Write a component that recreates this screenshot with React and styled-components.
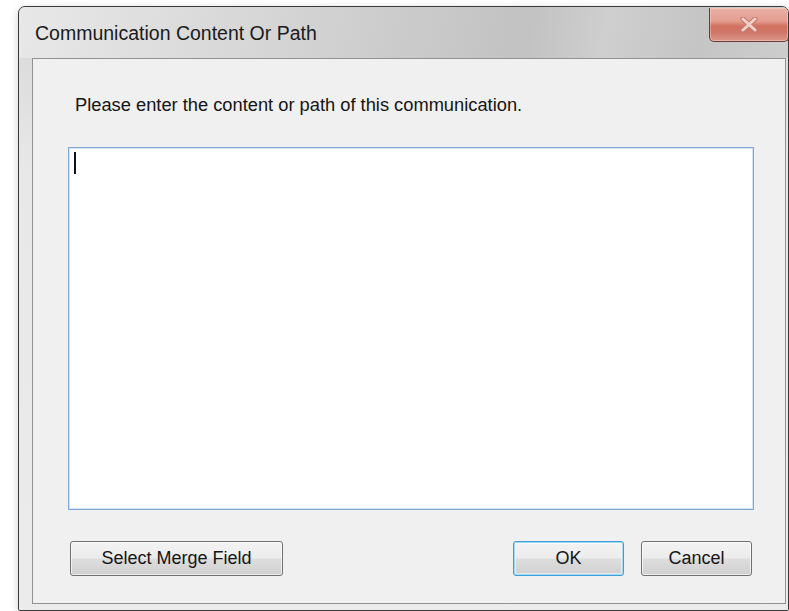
import styled, { createGlobalStyle, css } from "styled-components"

const GlobalStyle = createGlobalStyle`
  html, body {
    margin: 0;
    padding: 0;
    background: #ffffff;
  }
  body {
    font-family: "Liberation Sans", Arial, sans-serif;
    overflow: hidden;
  }
`

function App() {
  return (
    <>
      <GlobalStyle />
      <Window>
        <TitleBar>
          <Title>Communication Content Or Path</Title>
          <CloseButton aria-label="Close">
            <svg width="18" height="15" viewBox="0 0 18 15">
              <path d="M3 2 L15 13 M15 2 L3 13" stroke="#c4766a" strokeWidth="5" strokeLinecap="round" />
              <path d="M3 2 L15 13 M15 2 L3 13" stroke="#f1d0ca" strokeWidth="3" strokeLinecap="round" />
            </svg>
          </CloseButton>
        </TitleBar>
        <Frame>
          <Panel>
            <Prompt>Please enter the content or path of this communication.</Prompt>
            <Field>
              <Caret />
            </Field>
            <ButtonRow>
              <Button $width={213}>Select Merge Field</Button>
              <Spacer />
              <Button $width={111} $default>OK</Button>
              <Button $width={111}>Cancel</Button>
            </ButtonRow>
          </Panel>
        </Frame>
      </Window>
    </>
  )
}

export default App

const Window = styled.div`
  box-sizing: border-box;
  margin: 6px 0 0 18px;
  width: 771px;
  height: 605px;
  display: flex;
  flex-direction: column;
  border: 1px solid #3a3a3a;
  border-radius: 7px 7px 2px 2px;
  background: #e6e6e6;
  box-shadow: inset 1px 0 0 #7a7a7a, inset 0 0 0 2px rgba(255, 255, 255, 0.45),
    0 2px 8px rgba(0, 0, 0, 0.18);
  overflow: hidden;
`

const TitleBar = styled.div`
  height: 51px;
  flex: none;
  display: flex;
  justify-content: space-between;
  align-items: flex-start;
  padding-left: 16px;
  background: linear-gradient(
    100deg,
    #e8e8e8 0%,
    #dadada 25%,
    #cbcbcb 50%,
    #c2c2c2 66%,
    #cfcfcf 76%,
    #c5c5c5 88%,
    #cdcdcd 100%
  );
`

const Title = styled.div`
  margin-top: 15px;
  font-size: 19.5px;
  line-height: 23px;
  color: #1a1a1a;
`

const CloseButton = styled.div`
  box-sizing: border-box;
  width: 80px;
  height: 34px;
  margin: 1px -1px 0 0;
  display: flex;
  align-items: center;
  justify-content: center;
  border: 1px solid #6a3a33;
  border-top: none;
  border-radius: 0 0 5px 5px;
  background: linear-gradient(
    #eab0a6 0%,
    #e39d90 40%,
    #d2705f 55%,
    #d0776a 75%,
    #d99689 100%
  );
  box-shadow: inset 0 0 0 1px rgba(255, 220, 210, 0.45);
`

const Frame = styled.div`
  flex: 1;
  display: flex;
  padding: 0 2px 6px 13px;
  background: linear-gradient(#dcdcdc, #e8e8e8 20%, #ebebeb);
`

const Panel = styled.div`
  flex: 1;
  display: flex;
  flex-direction: column;
  border: 1px solid #929292;
  background: #f0f0f0;
  padding: 35px 31px 27px 35px;
`

const Prompt = styled.div`
  padding-left: 7px;
  font-size: 18.3px;
  line-height: 21px;
  color: #141414;
`

const Field = styled.div`
  flex: 1;
  margin: 32px 0 31px;
  padding: 4px 5px;
  background: #ffffff;
  border: 1px solid #80a8d4;
  box-shadow: inset 0 0 0 1px #d2e3f4;
`

const Caret = styled.div`
  width: 2px;
  height: 22px;
  background: #111111;
`

const ButtonRow = styled.div`
  display: flex;
  gap: 17px;
  padding: 0 2px;
`

const Spacer = styled.div`
  flex: 1;
`

const Button = styled.div`
  box-sizing: border-box;
  width: ${(p) => p.$width}px;
  height: 35px;
  display: flex;
  align-items: center;
  justify-content: center;
  border: 1px solid #707070;
  border-radius: 3px;
  font-size: 18px;
  color: #151515;
  background: linear-gradient(#f3f3f3 0%, #ececec 48%, #dddddd 52%, #d0d0d0 100%);
  box-shadow: inset 0 0 0 1px rgba(255, 255, 255, 0.65);

  ${(p) =>
    p.$default &&
    css`
      border-color: #3c9fd6;
      box-shadow: inset 0 0 0 1px #9edaf4, inset 0 0 0 2px rgba(255, 255, 255, 0.5);
    `}
`
